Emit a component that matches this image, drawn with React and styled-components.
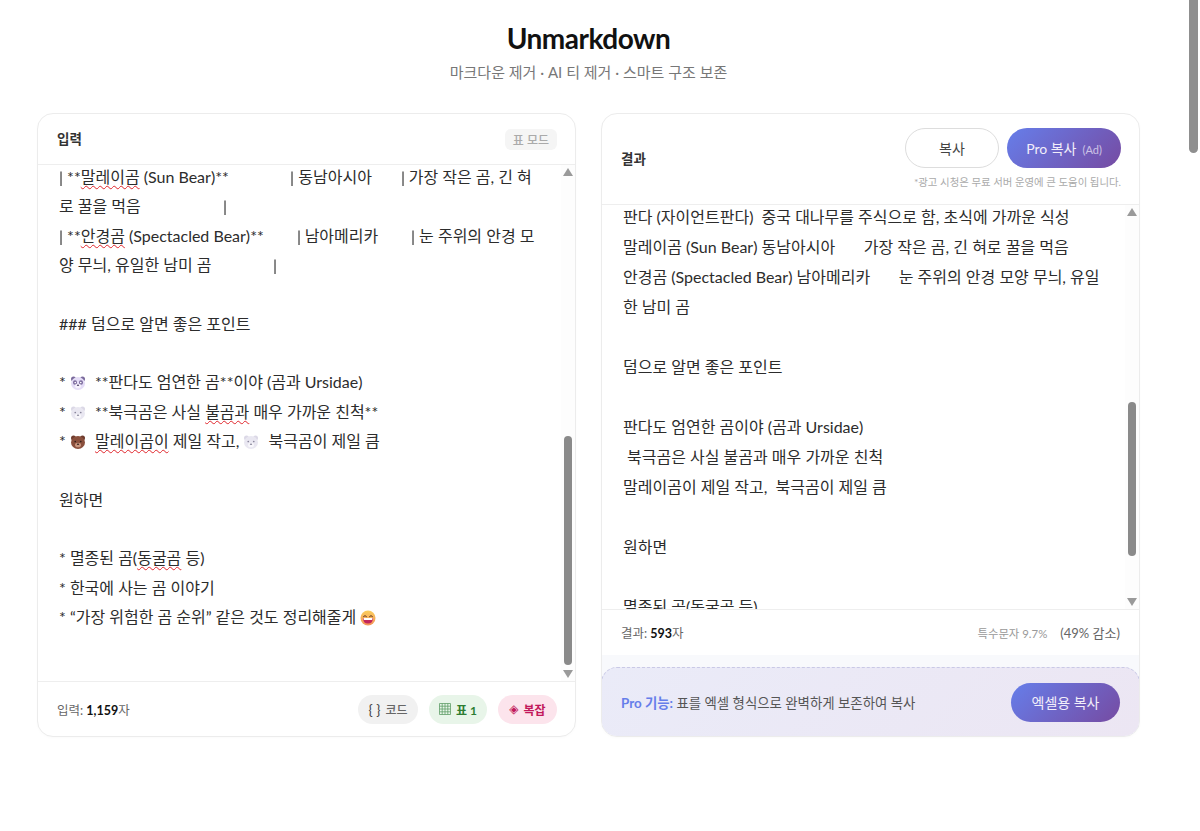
import React from "react";
import styled, { createGlobalStyle } from "styled-components";

const GlobalStyle = createGlobalStyle`
  html, body {
    margin: 0;
    padding: 0;
    background: #fff;
    overflow: hidden;
  }
  body {
    font-family: Lato, "Noto Sans CJK KR", sans-serif;
    color: #222;
  }
`;

const Page = styled.div`
  width: 1200px;
  height: 831px;
  overflow: hidden;
`;

const Container = styled.div`
  width: 1103px;
  margin-left: 37px;
`;

const Header = styled.header`
  height: 113px;
  padding-top: 17px;
  box-sizing: border-box;
  text-align: center;
`;

const Title = styled.h1`
  margin: 0;
  font-size: 28px;
  line-height: 42px;
  font-weight: 700;
  color: #111;
  letter-spacing: -0.5px;
`;

const Subtitle = styled.p`
  margin: 3px 0 0;
  font-size: 15px;
  line-height: 20px;
  color: #777;
`;

const Columns = styled.main`
  display: grid;
  grid-template-columns: 539px 539px;
  gap: 25px;
  height: 624px;
`;

const Card = styled.section`
  display: flex;
  flex-direction: column;
  box-sizing: border-box;
  border: 1px solid #ececec;
  border-radius: 16px;
  background: #fff;
  overflow: hidden;
  box-shadow: 0 1px 3px rgba(0, 0, 0, 0.02);
`;

const CardHead = styled.div`
  display: flex;
  justify-content: space-between;
  align-items: center;
  box-sizing: border-box;
  height: ${(p) => p.$h}px;
  flex: none;
  padding: 0 18px 0 19px;
  border-bottom: 1px solid #eee;
`;

const CardTitle = styled.h2`
  margin: -3px 0 0;
  font-size: 13.5px;
  font-weight: 700;
  color: #333;
`;

const ModeTag = styled.span`
  display: flex;
  align-items: center;
  height: 21px;
  padding: 0 8px;
  border-radius: 6px;
  background: #f5f5f5;
  color: #aaa;
  font-size: 12px;
  font-weight: 500;
`;

const ActionsBox = styled.div`
  display: flex;
  flex-direction: column;
  align-items: flex-end;
  gap: 7px;
  margin-top: -2px;
`;

const ButtonRow = styled.div`
  display: flex;
  gap: 8px;
`;

const CopyButton = styled.button`
  width: 94px;
  height: 40px;
  border: 1px solid #ddd;
  border-radius: 20px;
  background: #fff;
  color: #444;
  font: inherit;
  font-size: 14px;
`;

const GradientButton = styled.button`
  width: ${(p) => p.$w}px;
  height: ${(p) => p.$h}px;
  border: 0;
  border-radius: 20px;
  background: linear-gradient(135deg, #667eea 0%, #764ba2 100%);
  color: #f2eefa;
  font: inherit;
  font-size: 14px;
  font-weight: 400;
  padding: 0;
`;

const AdMark = styled.span`
  margin-left: 6px;
  font-size: 11px;
  opacity: 0.7;
`;

const AdNote = styled.div`
  font-size: 10.4px;
  line-height: 14px;
  color: #aaa;
`;

const TextArea = styled.div`
  position: relative;
  flex: 1;
  min-height: 0;
  overflow: hidden;
`;

const Lines = styled.div`
  margin-top: ${(p) => p.$top}px;
  padding-left: ${(p) => p.$left}px;
  font-size: 16px;
  line-height: ${(p) => p.$lh}px;
  color: #2c2c2c;
  white-space: pre;
`;

const Line = styled.div`
  height: ${(p) => p.$lh}px;
`;

const Pipe = styled.span`
  display: inline-block;
  will-change: transform;
`;

const Spell = styled.span`
  text-decoration: underline wavy #e0252b 1px;
  text-underline-offset: 2px;
  text-decoration-skip-ink: none;
`;

const Track = styled.div`
  position: absolute;
  top: 0;
  right: 0;
  bottom: 0;
  width: 14px;
  background: #fdfdfd;
`;

const Arrow = styled.div`
  position: absolute;
  left: 2px;
  ${(p) => (p.$up ? "top: 3px;" : "bottom: 3px;")}
  width: 0;
  height: 0;
  border-left: 5px solid transparent;
  border-right: 5px solid transparent;
  ${(p) => (p.$up ? "border-bottom" : "border-top")}: 8px solid #9a9a9a;
`;

const Thumb = styled.div`
  position: absolute;
  left: 3px;
  top: ${(p) => p.$top}px;
  width: 8px;
  height: ${(p) => p.$h}px;
  border-radius: 4px;
  background: #8a8a8a;
`;

const PageThumb = styled.div`
  position: fixed;
  top: 0;
  right: 2px;
  width: 9px;
  height: 153px;
  border-radius: 0 0 5px 5px;
  background: #8f8f8f;
`;

const CardFoot = styled.div`
  display: flex;
  justify-content: space-between;
  align-items: center;
  box-sizing: border-box;
  height: ${(p) => p.$h}px;
  flex: none;
  padding: 0 18px 0 19px;
  border-top: 1px solid #eee;
  font-size: 12.5px;
  color: #666;
`;

const Count = styled.span`
  b {
    font-weight: 700;
    color: #111;
  }
`;

const Chips = styled.div`
  display: flex;
  gap: 11px;
`;

const Chip = styled.span`
  display: flex;
  align-items: center;
  justify-content: center;
  gap: 5px;
  height: 29px;
  width: ${(p) => p.$w}px;
  border-radius: 15px;
  background: ${(p) => p.$bg};
  color: ${(p) => p.$fg};
  font-size: 12px;
  font-weight: ${(p) => (p.$bold ? 700 : 500)};
`;

const Braces = styled.span`
  font-size: 14px;
  font-weight: 400;
  color: #444;
`;

const Diamond = styled.span`
  font-family: "DejaVu Sans", sans-serif;
  font-size: 12px;
`;

const Stats = styled.div`
  display: flex;
  align-items: center;
  gap: 13px;
  margin-right: 1px;
  font-size: 13px;
`;

const SpecialRate = styled.span`
  font-size: 11.4px;
  color: #999;
`;

const BannerWrap = styled.div`
  flex: none;
  padding-top: 12px;
  background: #f8f9fc;
`;

const ProBanner = styled.div`
  display: flex;
  justify-content: space-between;
  align-items: center;
  box-sizing: border-box;
  height: 70px;
  padding: 0 19px;
  margin: 0 -1px -1px;
  border: 1px dashed #c9c9e6;
  border-radius: 16px;
  background: linear-gradient(135deg, #eaebf8 0%, #ece6f3 100%);
  font-size: 13.4px;
  color: #555;
`;

const ProLabel = styled.b`
  color: #667eea;
  font-weight: 700;
`;

const EmojiSvg = styled.svg`
  display: inline-block;
  width: 16px;
  height: 16px;
  margin-right: 5px;
  vertical-align: -3px;
`;

function BearFace({ face, ear, snout, dark, panda }) {
  return (
    <EmojiSvg viewBox="0 0 32 32">
      <circle cx="7" cy="8" r="5" fill={ear} />
      <circle cx="25" cy="8" r="5" fill={ear} />
      <ellipse cx="16" cy="17" rx="14" ry="13" fill={face} />
      {panda && <ellipse cx="10" cy="15" rx="4" ry="4.6" fill={ear} />}
      {panda && <ellipse cx="22" cy="15" rx="4" ry="4.6" fill={ear} />}
      <circle cx="10.5" cy="15" r="1.7" fill={panda ? "#fff" : dark} />
      <circle cx="21.5" cy="15" r="1.7" fill={panda ? "#fff" : dark} />
      <ellipse cx="16" cy="22" rx="6" ry="4.6" fill={snout} />
      <ellipse cx="16" cy="20.5" rx="2.4" ry="1.6" fill={dark} />
    </EmojiSvg>
  );
}

const Panda = () => (
  <BearFace face="#e4dcf6" ear="#7a6a9c" snout="#f6f2fc" dark="#4b3f66" panda />
);
const PolarBear = () => (
  <BearFace face="#e9e7f1" ear="#dbd8e6" snout="#f8f7fb" dark="#8a869c" />
);
const BrownBear = () => (
  <BearFace face="#8a4f3c" ear="#6f3c2e" snout="#c99780" dark="#33201a" />
);

const Grin = () => (
  <EmojiSvg viewBox="0 0 32 32">
    <defs>
      <linearGradient id="grinFace" x1="0" y1="0" x2="0" y2="1">
        <stop offset="0" stopColor="#fbcf5c" />
        <stop offset="1" stopColor="#f3935a" />
      </linearGradient>
    </defs>
    <circle cx="16" cy="16" r="15" fill="url(#grinFace)" />
    <path d="M7 13q3-4 6 0M19 13q3-4 6 0" fill="none" stroke="#5b3320" strokeWidth="2" strokeLinecap="round" />
    <path d="M6 16h20q0 11-10 11T6 16z" fill="#c2255c" />
    <path d="M7 16h18q0 3-1 4H8q-1-1-1-4z" fill="#fff" />
  </EmojiSvg>
);

const GridIcon = () => (
  <svg width="12" height="12" viewBox="0 0 12 12" fill="none" stroke="#5f9e68" strokeWidth="0.8">
    <path d="M.5.5h11v11H.5zM.5 3.2h11M.5 6h11M.5 8.8h11M3.2.5v11M6 .5v11M8.8.5v11" />
  </svg>
);

const LEFT_LH = 29.33;
const RIGHT_LH = 30;

const leftLines = [
  <><Pipe>|</Pipe> **<Spell>말레이곰</Spell> (Sun Bear)**               <Pipe>|</Pipe> 동남아시아       <Pipe>|</Pipe> 가장 작은 곰, 긴 혀</>,
  <>로 꿀을 먹음                    <Pipe>|</Pipe></>,
  <><Pipe>|</Pipe> **<Spell>안경곰</Spell> (Spectacled Bear)**        <Pipe>|</Pipe> 남아메리카        <Pipe>|</Pipe> 눈 주위의 안경 모</>,
  <>양 무늬, 유일한 남미 곰               <Pipe>|</Pipe></>,
  "",
  "### 덤으로 알면 좋은 포인트",
  "",
  <>* <Panda /> **판다도 엄연한 곰**이야 (곰과 Ursidae)</>,
  <>* <PolarBear /> **북극곰은 사실 <Spell>불곰과</Spell> 매우 가까운 친척**</>,
  <>* <BrownBear /> <Spell>말레이곰이</Spell> 제일 작고, <PolarBear /> 북극곰이 제일 큼</>,
  "",
  "원하면",
  "",
  <>* 멸종된 곰(<Spell>동굴곰</Spell> 등)</>,
  "* 한국에 사는 곰 이야기",
  <>* “가장 위험한 곰 순위” 같은 것도 정리해줄게 <Grin /></>,
];

const rightLines = [
  "판다 (자이언트판다)  중국 대나무를 주식으로 함, 초식에 가까운 식성",
  "말레이곰 (Sun Bear) 동남아시아       가장 작은 곰, 긴 혀로 꿀을 먹음",
  "안경곰 (Spectacled Bear) 남아메리카       눈 주위의 안경 모양 무늬, 유일",
  "한 남미 곰",
  "",
  "덤으로 알면 좋은 포인트",
  "",
  "판다도 엄연한 곰이야 (곰과 Ursidae)",
  " 북극곰은 사실 불곰과 매우 가까운 친척",
  "말레이곰이 제일 작고,  북극곰이 제일 큼",
  "",
  "원하면",
  "",
  "멸종된 곰(동굴곰 등)",
];

export default function App() {
  return (
    <Page>
      <GlobalStyle />
      <Container>
        <Header>
          <Title>Unmarkdown</Title>
          <Subtitle>마크다운 제거 · AI 티 제거 · 스마트 구조 보존</Subtitle>
        </Header>
        <Columns>
          <Card>
            <CardHead $h={51}>
              <CardTitle>입력</CardTitle>
              <ModeTag>표 모드</ModeTag>
            </CardHead>
            <TextArea>
              <Lines $top={-3} $left={21} $lh={LEFT_LH}>
                {leftLines.map((l, i) => (
                  <Line key={i} $lh={LEFT_LH}>{l}</Line>
                ))}
              </Lines>
              <Track>
                <Arrow $up />
                <Thumb $top={271} $h={229} />
                <Arrow />
              </Track>
            </TextArea>
            <CardFoot $h={55}>
              <Count>입력: <b>1,159</b>자</Count>
              <Chips>
                <Chip $w={60} $bg="#f1f1f1" $fg="#666"><Braces>{"{ }"}</Braces>코드</Chip>
                <Chip $w={58} $bg="#e8f5e9" $fg="#2e7d32" $bold><GridIcon />표 1</Chip>
                <Chip $w={59} $bg="#fce4ec" $fg="#c2185b" $bold><Diamond>◈</Diamond>복잡</Chip>
              </Chips>
            </CardFoot>
          </Card>
          <Card>
            <CardHead $h={91}>
              <CardTitle>결과</CardTitle>
              <ActionsBox>
                <ButtonRow>
                  <CopyButton>복사</CopyButton>
                  <GradientButton $w={114} $h={40}>Pro 복사<AdMark>(Ad)</AdMark></GradientButton>
                </ButtonRow>
                <AdNote>*광고 시청은 무료 서버 운영에 큰 도움이 됩니다.</AdNote>
              </ActionsBox>
            </CardHead>
            <TextArea>
              <Lines $top={-3} $left={21} $lh={RIGHT_LH}>
                {rightLines.map((l, i) => (
                  <Line key={i} $lh={RIGHT_LH}>{l}</Line>
                ))}
              </Lines>
              <Track>
                <Arrow $up />
                <Thumb $top={197} $h={154} />
                <Arrow />
              </Track>
            </TextArea>
            <CardFoot $h={46}>
              <Count>결과: <b>593</b>자</Count>
              <Stats>
                <SpecialRate>특수문자 9.7%</SpecialRate>
                <span>(49% 감소)</span>
              </Stats>
            </CardFoot>
            <BannerWrap>
              <ProBanner>
                <span><ProLabel>Pro 기능:</ProLabel> 표를 엑셀 형식으로 완벽하게 보존하여 복사</span>
                <GradientButton $w={109} $h={39}>엑셀용 복사</GradientButton>
              </ProBanner>
            </BannerWrap>
          </Card>
        </Columns>
      </Container>
      <PageThumb />
    </Page>
  );
}
